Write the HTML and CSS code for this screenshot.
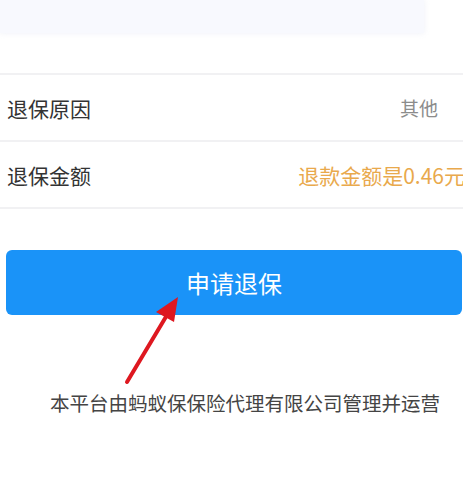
FILE: index.html
```html
<!DOCTYPE html>
<html>
  <head>
    <meta charset="utf-8">
    <title>退保</title>
    <link rel="stylesheet" href="styles.css">
  </head>
  <body>
    <div class="top-card"></div>

    <div class="form-list">
      <div class="form-row">
        <span class="row-label">退保原因</span>
        <span class="row-value">其他</span>
      </div>
      <div class="form-row">
        <span class="row-label">退保金额</span>
        <span class="row-value row-amount">退款金额是0.46元</span>
      </div>
    </div>

    <button class="btn btn-primary">申请退保</button>

    <!-- annotation arrow drawn over the page -->
    <svg class="annotation-arrow" width="80" height="100" viewBox="0 0 80 100">
      <line x1="7" y1="92" x2="50" y2="20" stroke="#de1820" stroke-width="4" stroke-linecap="round" />
      <polygon points="58,7 36,22 54,32" fill="#de1820" />
    </svg>

    <div class="footer-note">本平台由蚂蚁保保险代理有限公司管理并运营</div>
  </body>
</html>
```

FILE: styles.css
```css
:root {
  --primary-color: #1a93f8;
  --line-color: #f1f1f3;
  --text-primary: #333333;
  --text-muted: #8c8c8c;
  --text-amount: #e9a94c;
}

body {
  margin: 0;
  background: #ffffff;
  font-family: "Noto Sans CJK SC", "Noto Sans", sans-serif;
  color: var(--text-primary);
  width: 463px;
  overflow: hidden;
  position: relative;
}

.top-card {
  width: 424px;
  height: 33px;
  background: #f8f9fe;
  box-shadow: 0 0 6px rgba(226, 230, 242, 0.6);
}

/* Form rows */
.form-list {
  margin-top: 40px;
  border-top: 2px solid var(--line-color);
}

.form-row {
  display: flex;
  align-items: center;
  justify-content: space-between;
  height: 65px;
  padding: 0 25px 0 7px;
  border-bottom: 2px solid var(--line-color);
}

.row-label {
  font-size: 21px;
  color: #333;
}

.row-value {
  font-size: 19px;
  color: var(--text-muted);
}

.row-amount {
  font-size: 21px;
  color: var(--text-amount);
  margin-right: -27px;
  white-space: nowrap;
}

/* Button */
.btn {
  border: none;
  cursor: pointer;
  font-family: inherit;
}

.btn-primary {
  display: block;
  width: 456px;
  height: 65px;
  margin: 41px 0 0 6px;
  background: var(--primary-color);
  color: #ffffff;
  font-size: 24px;
  border-radius: 6px;
  padding: 0;
}

.annotation-arrow {
  position: absolute;
  left: 120px;
  top: 290px;
}

.footer-note {
  margin-top: 75px;
  padding-left: 50px;
  font-size: 19.5px;
  line-height: 26px;
  color: #444;
  white-space: nowrap;
}
```
